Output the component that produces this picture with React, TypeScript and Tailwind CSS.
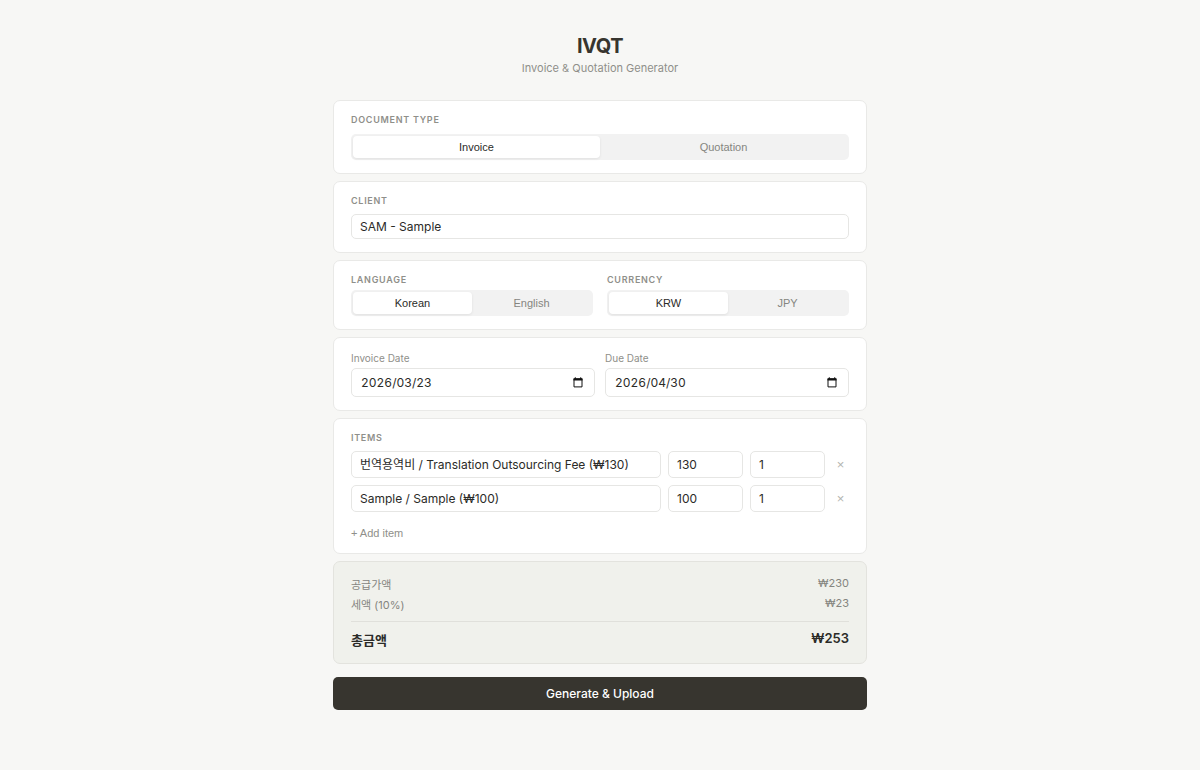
import React, { useState } from 'react';
import { clsx } from 'clsx';

type Item = { id: number; product: string; price: number; quantity: number };

const CLIENTS = ['SAM - Sample'];
const PRODUCTS = ['번역용역비 / Translation Outsourcing Fee (₩130)', 'Sample / Sample (₩100)'];

const FIELD = 'w-full rounded-[5px] border border-[#e6e6e4] bg-white px-2 text-[12px] text-[#2b2b28] outline-none';

function formatAmount(amount: number, currency: string): string {
  const symbol = currency === 'JPY' ? '¥' : '₩';
  return `${symbol}${amount.toLocaleString('en-US')}`;
}

function Card({ className, children }: { className?: string; children: React.ReactNode }) {
  return (
    <section className={clsx('rounded-[7px] border px-[17px] py-[13px]', className ?? 'border-[#e9e9e7] bg-white')}>
      {children}
    </section>
  );
}

function SectionLabel({ id, children }: { id?: string; children: React.ReactNode }) {
  return (
    <h2 id={id} className="text-[9px] font-semibold uppercase leading-3 tracking-[0.08em] text-[#8f8f8a]">
      {children}
    </h2>
  );
}

function Segmented({
  labelledBy,
  options,
  value,
  onChange,
}: {
  labelledBy: string;
  options: string[];
  value: string;
  onChange: (value: string) => void;
}) {
  return (
    <div role="group" aria-labelledby={labelledBy} className="flex h-[26px] rounded-[5px] bg-[#f2f2f2] p-[2px]">
      {options.map((option) => (
        <button
          key={option}
          type="button"
          aria-pressed={option === value}
          onClick={() => onChange(option)}
          className={clsx(
            "flex-1 rounded-[4px] text-center font-['Liberation_Sans',Arial,sans-serif] text-[11px] leading-4",
            option === value ? 'bg-white text-[#2b2b28] shadow-[0_1px_3px_rgba(0,0,0,0.08)]' : 'text-[#85857f]'
          )}
        >
          {option}
        </button>
      ))}
    </div>
  );
}

function CalendarIcon() {
  return (
    <svg viewBox="0 0 10 11" className="h-[11px] w-[10px]" fill="none" aria-hidden="true">
      <path d="M1 2h8v7.9H1z" stroke="#111" strokeWidth="1" />
      <path d="M.5 1.2h9v2.3h-9zM1.8.2h1v1h-1zM7.2.2h1v1h-1z" fill="#111" />
    </svg>
  );
}

function DateField({ id, label, value, onChange }: { id: string; label: string; value: string; onChange: (value: string) => void }) {
  return (
    <div className="min-w-0 flex-1">
      <label htmlFor={id} className="block text-[10px] leading-[14px] text-[#8f8f8a]">
        {label}
      </label>
      <div className="mt-[3px] flex h-[29px] items-center rounded-[5px] border border-[#e6e6e4] bg-white pl-[9px] pr-[11px]">
        <input
          id={id}
          value={value}
          onChange={(event) => onChange(event.target.value)}
          className="min-w-0 flex-1 text-[12px] tabular-nums leading-4 text-[#2b2b28] outline-none"
        />
        <button type="button" aria-label={`Open ${label} calendar`}>
          <CalendarIcon />
        </button>
      </div>
    </div>
  );
}

export default function App() {
  const [docType, setDocType] = useState('Invoice');
  const [client, setClient] = useState(CLIENTS[0]);
  const [language, setLanguage] = useState('Korean');
  const [currency, setCurrency] = useState('KRW');
  const [invoiceDate, setInvoiceDate] = useState('2026/03/23');
  const [dueDate, setDueDate] = useState('2026/04/30');
  const [items, setItems] = useState<Item[]>([
    { id: 1, product: PRODUCTS[0], price: 130, quantity: 1 },
    { id: 2, product: PRODUCTS[1], price: 100, quantity: 1 },
  ]);

  const subtotal = items.reduce((sum, item) => sum + item.price * item.quantity, 0);
  const tax = Math.round(subtotal * 0.1);

  const updateItem = (id: number, patch: Partial<Item>) => {
    setItems(items.map((item) => (item.id === id ? { ...item, ...patch } : item)));
  };

  const addItem = () => {
    setItems([...items, { id: Date.now(), product: PRODUCTS[1], price: 100, quantity: 1 }]);
  };

  return (
    <div className="min-h-screen bg-[#f7f7f5] px-4 pb-14 pt-[34px] font-[Inter,'Noto_Sans_CJK_KR',sans-serif] text-[#37352f]">
      <main className="mx-auto max-w-[534px]">
        <header className="mb-6 text-center">
          <h1 className="text-[20px] font-bold leading-6 tracking-tight">IVQT</h1>
          <p className="mt-[2px] text-[11px] leading-4 text-[#8f8f8a]">Invoice &amp; Quotation Generator</p>
        </header>

        <div className="flex flex-col gap-[7px]">
          <Card>
            <SectionLabel id="doc-type">Document Type</SectionLabel>
            <div className="mt-2">
              <Segmented labelledBy="doc-type" options={['Invoice', 'Quotation']} value={docType} onChange={setDocType} />
            </div>
          </Card>

          <Card>
            <SectionLabel id="client">Client</SectionLabel>
            <select
              aria-labelledby="client"
              value={client}
              onChange={(event) => setClient(event.target.value)}
              className={clsx(FIELD, 'mt-[7px] block h-[25px] appearance-none')}
            >
              {CLIENTS.map((name) => (
                <option key={name}>{name}</option>
              ))}
            </select>
          </Card>

          <Card>
            <div className="flex gap-[14px]">
              <div className="flex-1">
                <SectionLabel id="language">Language</SectionLabel>
                <div className="mt-1">
                  <Segmented labelledBy="language" options={['Korean', 'English']} value={language} onChange={setLanguage} />
                </div>
              </div>
              <div className="flex-1">
                <SectionLabel id="currency">Currency</SectionLabel>
                <div className="mt-1">
                  <Segmented labelledBy="currency" options={['KRW', 'JPY']} value={currency} onChange={setCurrency} />
                </div>
              </div>
            </div>
          </Card>

          <Card>
            <div className="flex gap-[10px]">
              <DateField id="invoice-date" label="Invoice Date" value={invoiceDate} onChange={setInvoiceDate} />
              <DateField id="due-date" label="Due Date" value={dueDate} onChange={setDueDate} />
            </div>
          </Card>

          <Card>
            <SectionLabel>Items</SectionLabel>
            <div className="mt-[7px] flex flex-col gap-[7px]">
              {items.map((item) => (
                <div key={item.id} className="grid grid-cols-[1fr_75px_75px_17px] items-center gap-[7px]">
                  <select
                    aria-label="Product"
                    value={item.product}
                    onChange={(event) => updateItem(item.id, { product: event.target.value })}
                    className={clsx(FIELD, 'h-[27px] appearance-none')}
                  >
                    {PRODUCTS.map((name) => (
                      <option key={name}>{name}</option>
                    ))}
                  </select>
                  <input
                    type="number"
                    aria-label="Unit price"
                    value={item.price}
                    onChange={(event) => updateItem(item.id, { price: Number(event.target.value) })}
                    className={clsx(FIELD, 'h-[27px]')}
                  />
                  <input
                    type="number"
                    aria-label="Quantity"
                    value={item.quantity}
                    onChange={(event) => updateItem(item.id, { quantity: Number(event.target.value) })}
                    className={clsx(FIELD, 'h-[27px]')}
                  />
                  <button
                    type="button"
                    aria-label="Remove item"
                    onClick={() => setItems(items.filter((other) => other.id !== item.id))}
                    className="text-center font-['Liberation_Sans',Arial,sans-serif] text-[13px] leading-4 text-[#b4b4b0]"
                  >
                    ×
                  </button>
                </div>
              ))}
            </div>
            <button
              type="button"
              onClick={addItem}
              className="mt-[14px] block font-['Liberation_Sans',Arial,sans-serif] text-[11px] leading-[14px] text-[#8f8f8a]"
            >
              + Add item
            </button>
          </Card>

          <Card className="border-[#e3e3de] bg-[#f0f1ec]">
            <dl className="text-[11px] text-[#85857f]">
              <div className="flex justify-between">
                <dt className="leading-5">공급가액</dt>
                <dd className="leading-[17px]">{formatAmount(subtotal, currency)}</dd>
              </div>
              <div className="flex justify-between">
                <dt className="leading-5">세액 (10%)</dt>
                <dd className="leading-[17px]">{formatAmount(tax, currency)}</dd>
              </div>
              <div className="mt-[6px] flex justify-between border-t border-[#e0e0db] pt-2 text-[13px] font-semibold text-[#2b2b28]">
                <dt className="leading-5">총금액</dt>
                <dd className="leading-[17px]">{formatAmount(subtotal + tax, currency)}</dd>
              </div>
            </dl>
          </Card>
        </div>

        <button
          type="button"
          className="mt-[13px] block h-[33px] w-full rounded-[5px] bg-[#37352f] text-[12px] font-medium leading-4 text-white"
        >
          Generate &amp; Upload
        </button>
      </main>
    </div>
  );
}
